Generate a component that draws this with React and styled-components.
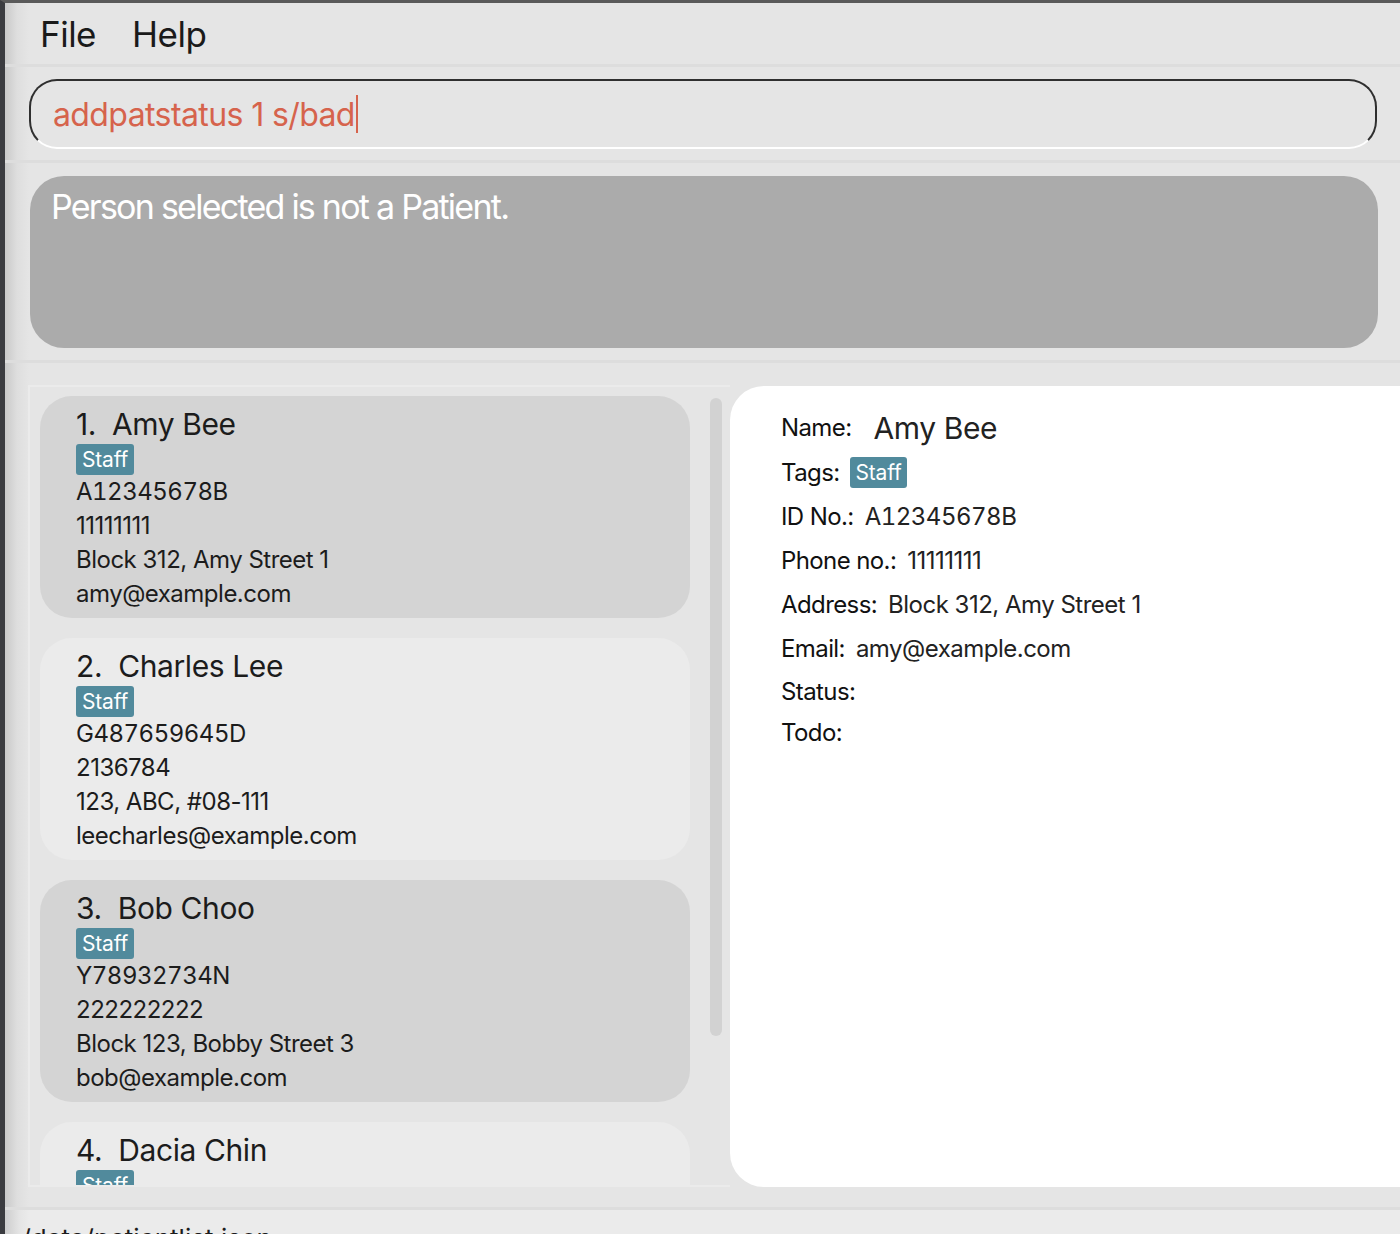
import React from 'react';
import styled, { createGlobalStyle } from 'styled-components';

const GlobalStyle = createGlobalStyle`
  html, body {
    margin: 0;
    padding: 0;
    background: #e5e5e5;
    overflow: hidden;
  }
  * {
    box-sizing: border-box;
  }
`;

//Whole window with the dark frame on the left and top
const Window = styled.div`
  width: 1400px;
  height: 1234px;
  display: flex;
  flex-direction: column;
  border-left: 5px solid #3b3c40;
  border-top: 3px solid #5a5a5a;
  background: linear-gradient(to right, #c9c9c9 0px, #dedede 12px, #e5e5e5 24px);
  font-family: Inter, 'Noto Sans', sans-serif;
  color: #1c1c1c;
  overflow: hidden;
`;

const MenuBar = styled.div`
  height: 64px;
  display: flex;
  align-items: center;
  gap: 36px;
  padding-left: 35px;
  border-bottom: 3px solid #dddddd;
`;

const MenuItem = styled.span`
  font-size: 35px;
  letter-spacing: -0.5px;
  color: #1a1a1a;
`;

const CommandSection = styled.div`
  padding: 12px 23px 11px 24px;
  border-bottom: 3px solid #dddddd;
`;

const CommandBox = styled.div`
  height: 70px;
  border-radius: 28px;
  border: 2px solid #2f2f2f;
  border-bottom-color: #ffffff;
  display: flex;
  align-items: center;
  padding-left: 22px;
`;

const CommandText = styled.span`
  font-size: 32px;
  letter-spacing: -0.6px;
  color: #d6634c;
`;

const Caret = styled.span`
  display: inline-block;
  width: 2px;
  height: 38px;
  background: #d6634c;
  margin-left: 1px;
`;

const ResultSection = styled.div`
  padding: 13px 22px 12px 25px;
  border-bottom: 3px solid #dddddd;
`;

const ResultBox = styled.div`
  height: 172px;
  border-radius: 34px;
  background: #ababab;
  color: #ffffff;
  font-size: 34px;
  letter-spacing: -1.75px;
  padding: 10px 21px;
`;

const MainRow = styled.div`
  flex: 1;
  display: flex;
  padding: 22px 0 20px 23px;
  min-height: 0;
`;

const ListPanel = styled.div`
  width: 702px;
  display: flex;
  border: 2px solid #ebebeb;
  border-right: none;
  overflow: hidden;
`;

const CardsColumn = styled.div`
  width: 660px;
  padding: 9px 0 0 10px;
  display: flex;
  flex-direction: column;
  gap: 20px;
  overflow: hidden;
`;

const Card = styled.div`
  flex-shrink: 0;
  width: 650px;
  height: 222px;
  border-radius: 32px;
  background: ${(p) => (p.$odd ? '#d4d4d4' : '#ebebeb')};
  padding: 8px 0 7px 36px;
  display: flex;
  flex-direction: column;
  align-items: flex-start;
`;

const CardName = styled.div`
  font-size: 30px;
  line-height: 40px;
  letter-spacing: -0.4px;
  color: #1c1c1c;
`;

const Index = styled.span`
  margin-right: 16px;
`;

const Tag = styled.span`
  display: inline-block;
  background: #518a9c;
  color: #ffffff;
  border-radius: 3px;
  font-size: 21px;
  line-height: 31px;
  height: 31px;
  padding: 0 6px;
  letter-spacing: -0.2px;
`;

// $tnum widens the digits for the ID numbers, as the reference font does
const CardLine = styled.div`
  font-size: 24px;
  line-height: 34px;
  letter-spacing: -0.5px;
  font-variant-numeric: ${(p) => (p.$tnum ? 'tabular-nums' : 'normal')};
  color: #1c1c1c;
`;

const ScrollTrack = styled.div`
  width: 12px;
  height: 638px;
  margin: 11px 0 0 20px;
  border-radius: 6px;
  background: #d2d2d2;
`;

const DetailPanel = styled.div`
  flex: 1;
  margin-top: 1px;
  background: #ffffff;
  border-radius: 34px 0 0 34px;
  padding: 19px 0 0 51px;
`;

const DetailRow = styled.div`
  height: ${(p) => p.$h || 44}px;
  display: flex;
  align-items: center;
  gap: ${(p) => p.$gap || 11}px;
`;

const Label = styled.span`
  font-size: 24px;
  letter-spacing: -0.6px;
  color: #111111;
`;

const Value = styled.span`
  font-size: ${(p) => (p.$big ? 30 : 24)}px;
  letter-spacing: ${(p) => (p.$big ? '-0.4px' : '-0.5px')};
  font-variant-numeric: ${(p) => (p.$tnum ? 'tabular-nums' : 'normal')};
  color: #222222;
`;

const StatusBar = styled.div`
  height: 27px;
  border-top: 3px solid #dddddd;
  background: linear-gradient(to right, #cdcdcd 0px, #e4e4e4 14px, #ebebeb 24px);
  padding: 14px 0 0 9px;
  overflow: hidden;
  font-size: 26px;
  line-height: 30px;
  color: #1c1c1c;
`;

const persons = [
  { name: 'Amy Bee', id: 'A12345678B', phone: '11111111', address: 'Block 312, Amy Street 1', email: 'amy@example.com' },
  { name: 'Charles Lee', id: 'G487659645D', phone: '2136784', address: '123, ABC, #08-111', email: 'leecharles@example.com' },
  { name: 'Bob Choo', id: 'Y78932734N', phone: '222222222', address: 'Block 123, Bobby Street 3', email: 'bob@example.com' },
  { name: 'Dacia Chin', id: 'D1234567E', phone: '33333333', address: 'Block 1, Dacia Road', email: 'dacia@example.com' },
];

const App = () => {
  const selected = persons[0];

  return (
    <>
      <GlobalStyle />
      <Window>
        <MenuBar>
          <MenuItem>File</MenuItem>
          <MenuItem>Help</MenuItem>
        </MenuBar>

        <CommandSection>
          <CommandBox>
            <CommandText>addpatstatus 1 s/bad</CommandText>
            <Caret />
          </CommandBox>
        </CommandSection>

        <ResultSection>
          <ResultBox>Person selected is not a Patient.</ResultBox>
        </ResultSection>

        <MainRow>
          <ListPanel>
            <CardsColumn>
              {persons.map((p, i) => (
                <Card key={p.id} $odd={i % 2 === 0}>
                  <CardName>
                    <Index>{i + 1}.</Index>
                    {p.name}
                  </CardName>
                  <Tag>Staff</Tag>
                  <CardLine $tnum>{p.id}</CardLine>
                  <CardLine>{p.phone}</CardLine>
                  <CardLine>{p.address}</CardLine>
                  <CardLine>{p.email}</CardLine>
                </Card>
              ))}
            </CardsColumn>
            <ScrollTrack />
          </ListPanel>

          <DetailPanel>
            <DetailRow $gap={22} $h={45}>
              <Label>Name:</Label>
              <Value $big>{selected.name}</Value>
            </DetailRow>
            <DetailRow $gap={10}>
              <Label>Tags:</Label>
              <Tag>Staff</Tag>
            </DetailRow>
            <DetailRow>
              <Label>ID No.:</Label>
              <Value $tnum>{selected.id}</Value>
            </DetailRow>
            <DetailRow>
              <Label>Phone no.:</Label>
              <Value>{selected.phone}</Value>
            </DetailRow>
            <DetailRow>
              <Label>Address:</Label>
              <Value>{selected.address}</Value>
            </DetailRow>
            <DetailRow>
              <Label>Email:</Label>
              <Value>{selected.email}</Value>
            </DetailRow>
            <DetailRow $h={42}>
              <Label>Status:</Label>
            </DetailRow>
            <DetailRow $h={40}>
              <Label>Todo:</Label>
            </DetailRow>
          </DetailPanel>
        </MainRow>

        <StatusBar>./data/patientlist.json</StatusBar>
      </Window>
    </>
  );
};

export default App;
